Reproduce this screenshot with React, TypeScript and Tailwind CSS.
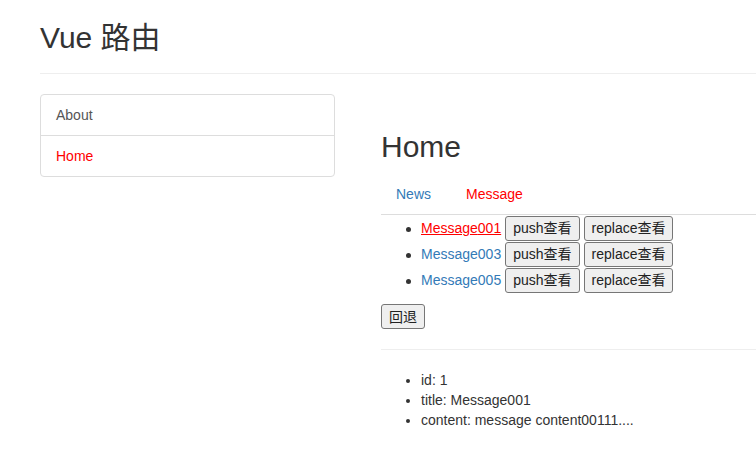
import React from "react";

const messages = [
  { id: "001", active: true },
  { id: "003", active: false },
  { id: "005", active: false },
];

const Btn: React.FC<{ children: React.ReactNode }> = ({ children }) => (
  <button className="inline-block align-middle h-[25px] px-[7px] border border-[#767676] rounded-[3px] bg-[#efefef] text-[14px] leading-[20px] text-[#222]">
    {children}
  </button>
);

export default function App() {
  return (
    <div
      className="w-[756px] h-[453px] overflow-hidden bg-white text-[#333] text-[14px] leading-[20px] pl-[40px]"
      style={{ fontFamily: '"Liberation Sans", Arial, "Noto Sans CJK SC", sans-serif' }}
    >
      <div className="mt-[21px] pb-[9px] border-b border-[#eee]">
        <h2 className="text-[30px] leading-[33px] font-normal mb-[10px]">Vue 路由</h2>
      </div>

      <div className="flex mt-[20px] gap-[46px]">
        <div className="w-[295px] shrink-0">
          <div className="border border-[#ddd] rounded-[4px]">
            <a className="block px-[15px] py-[10px] text-[#555] border-b border-[#ddd]">About</a>
            <a className="block px-[15px] py-[10px] text-[#f00]">Home</a>
          </div>
        </div>

        <div className="flex-1">
          <h2 className="mt-[36px] text-[30px] leading-[33px] font-normal mb-[10px]">Home</h2>
          <ul className="flex border-b border-[#ddd] pt-[1px]">
            <li className="mr-[5px]">
              <a className="block px-[15px] py-[10px] text-[#337ab7]">News</a>
            </li>
            <li>
              <a className="block px-[15px] py-[10px] text-[#f00]">Message</a>
            </li>
          </ul>
          <ul className="pl-[40px] mb-[11px]">
            {messages.map((m) => (
              <li key={m.id} className="h-[26px] flex items-center gap-[4px] relative">
                <span className="absolute -left-[15px] top-[12px] w-[5px] h-[5px] rounded-full bg-[#333]" />
                <a className={m.active ? "text-[#f00] underline" : "text-[#337ab7]"}>
                  Message{m.id}
                </a>
                <Btn>push查看</Btn>
                <Btn>replace查看</Btn>
              </li>
            ))}
          </ul>
          <Btn>回退</Btn>
          <hr className="mt-[20px] mb-[20px] border-0 border-t border-[#eee]" />
          <ul className="list-disc pl-[40px]">
            <li>id: 1</li>
            <li>title: Message001</li>
            <li>content: message content00111....</li>
          </ul>
        </div>
      </div>
    </div>
  );
}
